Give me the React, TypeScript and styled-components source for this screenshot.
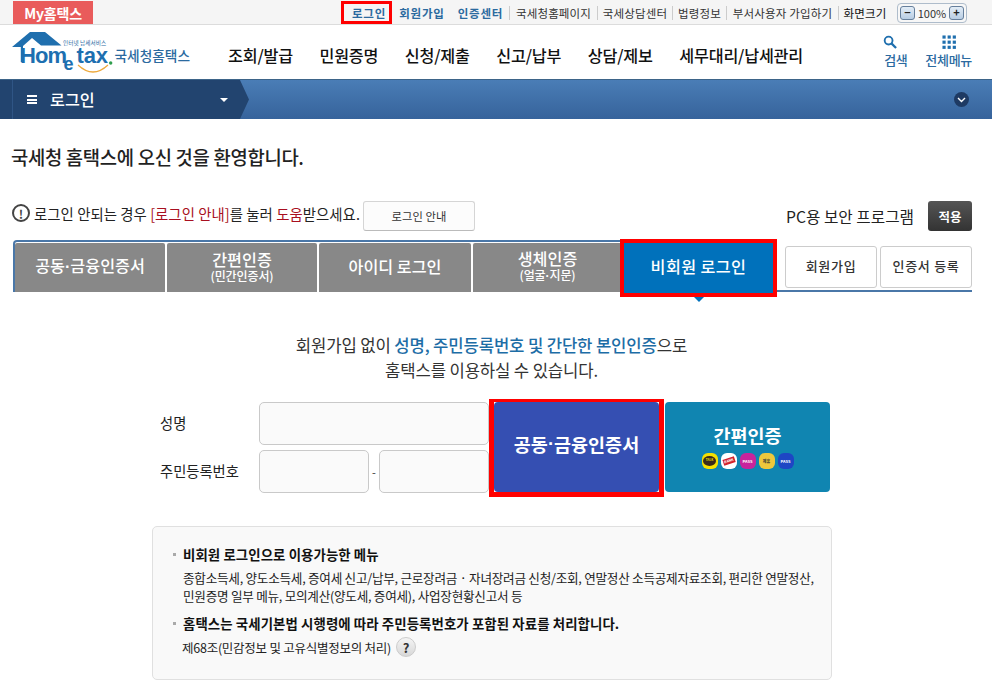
import React from "react";
import styled, { createGlobalStyle } from "styled-components";

const Global = createGlobalStyle`
  html, body { margin: 0; padding: 0; background: #fff; overflow: hidden; }
  body { font-family: "Noto Sans CJK KR", "Noto Sans", sans-serif; color: #222; }
  * { box-sizing: border-box; }
`;

const Page = styled.div`width: 992px; height: 689px; overflow: hidden;`;

const TopBar = styled.div`
  height: 25px; background: #f5f5f5; border-bottom: 1px solid #dcdcdc;
  display: flex; align-items: flex-start; justify-content: space-between; padding: 1px 25px 0 13px;
`;
const MyTab = styled.a`
  width: 80px; height: 23px; background: #e95b5b; color: #fff; font-size: 14px; font-weight: 700;
  display: flex; align-items: center; justify-content: center; letter-spacing: -0.2px;
`;
const TopLinks = styled.div`display: flex; align-items: center; height: 23px;`;
const TopPrimary = styled.a<{ $boxed?: boolean; $w: number }>`
  width: ${p => p.$w}px; height: 23px; display: flex; align-items: center; justify-content: center;
  color: #2b6a9f; font-size: 11.5px; font-weight: 700; letter-spacing: 0.8px; white-space: nowrap;
  ${p => p.$boxed && "border: 3px solid #f00; padding-left: 5px;"}
`;
const TopLink = styled.a<{ $w: number; $sep?: boolean; $dark?: boolean }>`
  width: ${p => p.$w}px; display: flex; align-items: center; justify-content: center; white-space: nowrap;
  font-size: 11.5px; letter-spacing: 0.15px; color: ${p => p.$dark ? "#111" : "#333"}; height: 14px;
  ${p => p.$sep && "border-left: 1px solid #ccc;"}
`;
const Zoomer = styled.div`
  width: 70px; height: 20px; margin-left: 6px; border: 1px solid #aebccb; border-radius: 4px;
  display: flex; align-items: center; justify-content: space-between; padding: 0 2px; font-size: 11px; color: #333; background: #f7f7f7;
`;
const ZoomBtn = styled.span`
  width: 15px; height: 14px; border: 1px solid #667f9c; border-radius: 3px; background: linear-gradient(#e3edf7, #b8cde3);
  display: flex; align-items: center; justify-content: center; font-size: 11px; line-height: 1; font-weight: 700; color: #222;
`;

const Header = styled.div`height: 54px; display: flex; align-items: flex-start; padding-left: 12px; background: #fff;`;
const LogoBox = styled.div`width: 181px; height: 54px; flex: none;`;
const Nav = styled.nav`display: flex; margin-left: 35px; padding-top: 19px; gap: 26.6px;`;
const NavItem = styled.a`font-size: 16.2px; font-weight: 500; color: #111; line-height: 22px; white-space: nowrap; letter-spacing: -0.2px;`;
const HeaderTools = styled.div`margin-left: auto; display: flex; gap: 17px; padding: 10px 20px 0 0;`;
const Tool = styled.a`
  display: flex; flex-direction: column; align-items: center; color: #2b6a9f; font-size: 13px; line-height: 18px; font-weight: 500; letter-spacing: -0.3px; gap: 2px;
`;
const SearchSlot = styled.span`display: flex; height: 14px; margin-right: 11px;`;

const Crumbs = styled.div`height: 40px; display: flex; align-items: center; background: linear-gradient(#4a7db6, #36639b); border-top: 1px solid #3d6488; padding-right: 23px;`;
const CrumbCurrent = styled.div`
  width: 249px; height: 100%; background: linear-gradient(90deg, #22446f 12px, #2f5585 12px, #2f5585 13px, #22446f 13px);
  clip-path: polygon(0 0, 240px 0, 249px 50%, 240px 100%, 0 100%);
  padding: 0 30px 0 27px; display: flex; align-items: center; color: #fff; font-size: 16.2px; font-weight: 500;
`;
const CrumbLabel = styled.span`padding-bottom: 2px;`;
const Bars = styled.span`width: 10px; height: 9px; border-top: 2px solid #fff; border-bottom: 2px solid #fff; position: relative; margin-right: 13px;
  &::after { content: ""; position: absolute; left: 0; right: 0; top: 1.5px; height: 2px; background: #fff; }
`;
const Caret = styled.span`margin-left: auto; margin-right: -9px; border: 4px solid transparent; border-top: 4px solid #fff; border-bottom: 0;`;
const Round = styled.span`margin-left: auto; width: 15px; height: 15px; border-radius: 50%; background: #1e3a63; display: flex; align-items: center; justify-content: center;`;

const Main = styled.main`padding: 0 20px 0 11px;`;
const Title = styled.h1`margin: 26px 0 0; font-size: 18.8px; line-height: 24px; font-weight: 500; color: #222; letter-spacing: -0.3px;`;
const NoticeRow = styled.div`display: flex; align-items: center; height: 30px; margin-top: 32px; justify-content: space-between;`;
const Notice = styled.div`display: flex; align-items: center; font-size: 14.4px; color: #222; letter-spacing: 0.05px; white-space: nowrap;`;
const NoticeText = styled.span`display: flex; align-items: center; padding-bottom: 6px;`;
const Alert = styled.span`
  width: 18px; height: 18px; border: 2px solid #444; border-radius: 50%; margin: 0 4px 0 1px; font-size: 12px; font-weight: 700; display: flex; align-items: center; justify-content: center; color: #444;
`;
const Red = styled.span`color: #a80f20;`;
const GuideBtn = styled.a`
  width: 112px; height: 30px; margin-left: 3px; border: 1px solid #d5d5d5; border-bottom-color: #bbb; border-radius: 3px; background: #fcfcfc; font-size: 11.3px;
  display: flex; align-items: center; justify-content: center; color: #333;
`;
const Security = styled.div`display: flex; align-items: center; gap: 14px; font-size: 15.7px; color: #222;`;
const Apply = styled.a`
  width: 44px; height: 30px; border-radius: 3px; background: linear-gradient(#555, #333); color: #fff; font-size: 12.5px; font-weight: 700;
  display: flex; align-items: center; justify-content: center;
`;

const TabRow = styled.div`display: flex; margin: 9px 0 0 2px; height: 52px; border-bottom: 2px solid #4a77a8; width: 959px;`;
const TabGroup = styled.div`display: flex; border-top: 2px solid #4a77a8; border-left: 2px solid #4a77a8; border-right: 2px solid #4a77a8; border-top-left-radius: 4px; border-top-right-radius: 4px; padding-top: 1px; gap: 2px; background: #fff; margin-bottom: -2px; height: 52px;`;
const Tab = styled.a<{ $w: number }>`
  width: ${p => p.$w}px; background: #888; color: #fff; font-size: 16.2px; font-weight: 500; border-radius: 2px 2px 0 0;
  display: flex; flex-direction: column; align-items: center; justify-content: center; line-height: 20px; height: 49px; white-space: nowrap; padding-bottom: 4px;
`;
const TabSub = styled.small`font-size: 12px; line-height: 14px; font-weight: 500; letter-spacing: -0.1px;`;
const Dot = styled.span`font-family: "Liberation Sans", sans-serif; font-weight: 700;`;
const ActiveTab = styled.a`
  width: 157px; height: 58px; margin: -4px -3px -5px -4px; border: 4px solid #f00; background: #0071bb; color: #fff; font-size: 16.2px; font-weight: 500;
  display: flex; align-items: center; justify-content: center; position: relative; letter-spacing: 0.4px; padding-bottom: 5px;
  &::after { content: ""; position: absolute; left: 50%; margin-left: -5px; bottom: -9px; border: 5px solid transparent; border-top-color: #0071bb; border-bottom: 0; }
`;
const SideBtns = styled.div`margin-left: auto; display: flex; gap: 3px; padding-top: 6px;`;
const SideBtn = styled.a<{ $w: number }>`
  width: ${p => p.$w}px; height: 42px; border: 1px solid #ccc; border-radius: 3px; background: #fff; font-size: 13px; font-weight: 500; letter-spacing: 0.7px; padding-bottom: 4px;
  display: flex; align-items: center; justify-content: center; color: #333;
`;

const Lead = styled.p`margin: 41px 0 0; text-align: center; font-size: 16.7px; line-height: 25px; color: #333; letter-spacing: -0.15px;`;
const Accent = styled.strong`color: #1d6da6; font-weight: 500;`;

const FormArea = styled.div`display: flex; margin: 19px 0 0 149px;`;
const Labels = styled.div`width: 99px; display: flex; flex-direction: column; gap: 5px; font-size: 14.3px; color: #222;`;
const FLabel = styled.label`height: 43px; display: flex; align-items: center; padding-bottom: 3px;`;
const Fields = styled.div`width: 230px; display: flex; flex-direction: column; gap: 5px;`;
const Input = styled.div<{ $w?: number }>`
  width: ${p => p.$w ? p.$w + "px" : "100%"}; height: 43px; border: 1px solid #c9c9c9; border-radius: 5px; background: #fafafa;
`;
const SsnRow = styled.div`display: flex; align-items: center; justify-content: space-between; font-size: 11px; color: #333;`;
const CertBtn = styled.a`
  width: 175px; height: 98px; margin: -3px 0 -5px 0; border-style: solid; border-color: #f00; border-width: 3px 5px 5px; background: #fff; flex: none;
  display: flex; align-items: stretch;
`;
const CertInner = styled.span`
  flex: 1; background: #354fb2; color: #fff; border-radius: 4px; display: flex; align-items: center; justify-content: center; font-size: 18.5px; font-weight: 700; white-space: nowrap; padding-bottom: 6px;
`;
const SimpleBtn = styled.a`
  width: 165px; height: 90px; margin-left: 1px; background: #1085b1; color: #fff; border-radius: 4px; display: flex; flex-direction: column; align-items: center; justify-content: center; font-size: 18.5px; line-height: 26px; font-weight: 700; gap: 5px; padding-bottom: 4px;
`;
const Badges = styled.span`display: flex; gap: 3px;`;
const Badge = styled.span<{ $bg: string; $fg: string }>`
  width: 16px; height: 16px; border-radius: 6px; background: ${p => p.$bg}; color: ${p => p.$fg}; font-size: 4px; line-height: 1; font-weight: 700; display: flex; align-items: center; justify-content: center; overflow: hidden; white-space: nowrap;
`;
const TalkBubble = styled.span`width: 13px; height: 10px; border-radius: 50%; background: #3a2a1a; color: #f5e000; display: flex; align-items: center; justify-content: center; font-size: 3px;`;
const BankBand = styled.span`background: #d2222d; color: #fff; padding: 1px; transform: rotate(-18deg); font-size: 3.5px;`;

const InfoBox = styled.section`
  width: 680px; height: 154px; margin: 33px 0 0 141px; border: 1px solid #e0e0e0; border-radius: 5px; background: #f9f9f9; padding: 18px 10px 0 20px;
`;
const InfoHead = styled.h3<{ $top?: number }>`
  margin: ${p => p.$top ?? 0}px 0 0; font-size: 13.4px; line-height: 18px; font-weight: 700; color: #111; padding-left: 10px; position: relative; letter-spacing: 0.1px; white-space: nowrap;
  &::before { content: ""; position: absolute; left: 0; top: 8px; width: 3px; height: 3px; background: #aaa; }
`;
const InfoText = styled.p`margin: 6px 0 0 10px; font-size: 12.6px; line-height: 18px; color: #222; letter-spacing: -0.25px; white-space: nowrap;`;
const LawRow = styled.div`margin: 5px 0 0 9px; display: flex; align-items: center; font-size: 12.5px; color: #222; gap: 5px; letter-spacing: -0.25px;`;
const Help = styled.span`
  width: 20px; height: 20px; border-radius: 50%; border: 1px solid #ccc; background: linear-gradient(#f4f4f4, #d8d8d8); color: #333; font-size: 13px; font-weight: 700; display: flex; align-items: center; justify-content: center;
`;

const Logo = () => (
  <svg width="181" height="54" viewBox="0 0 181 54">
    <path d="M0 22 L18 7 H33 L49.5 20.5 H29 L20 13 L11 21 V37 H8.8 V22 Z" fill="#1f6fae" />
    <text x="51" y="19.5" fontSize="5.6" fill="#2b6a9f" fontFamily="Noto Sans CJK KR, sans-serif" letterSpacing="0.1">인터넷 납세서비스</text>
    <text x="8" y="37.5" fontSize="22" fontWeight="700" fill="#1d6fb0" fontFamily="Liberation Sans, sans-serif" letterSpacing="-0.9">Hom</text>
    <text x="51.5" y="44.7" fontSize="18" fontWeight="700" fill="#1d6fb0" fontFamily="Liberation Sans, sans-serif">e</text>
    <text x="64.5" y="37.5" fontSize="22" fontWeight="700" fill="#1d6fb0" fontFamily="Liberation Sans, sans-serif" letterSpacing="-0.2">tax</text>
    <circle cx="98.7" cy="38" r="1.7" fill="#2f9e4d" />
    <path d="M66 40 Q81 54 96 40" fill="none" stroke="#eda93c" strokeWidth="1.2" />
    <text x="102.5" y="35.7" fontSize="13.7" fontWeight="500" fill="#2b6a9f" fontFamily="Noto Sans CJK KR, sans-serif">국세청홈택스</text>
  </svg>
);

const Search = () => (
  <svg width="14" height="14" viewBox="0 0 15 15"><circle cx="6" cy="6" r="4.2" fill="none" stroke="#1f6fae" strokeWidth="2" /><path d="M9 9 L14 14" stroke="#1f6fae" strokeWidth="2.4" /></svg>
);
const Grid = () => (
  <svg width="14" height="14" viewBox="0 0 15 15" fill="#1f6fae">
    {[0, 5.5, 11].flatMap(y => [0, 5.5, 11].map(x => <rect key={`${x}-${y}`} x={x + 0.5} y={y + 0.5} width="3.4" height="3.4" />))}
  </svg>
);

export default function App() {
  return (
    <Page>
      <Global />
      <TopBar>
        <MyTab>My홈택스</MyTab>
        <TopLinks>
          <TopPrimary $boxed $w={51}>로그인</TopPrimary>
          <TopPrimary $w={60}>회원가입</TopPrimary>
          <TopPrimary $w={57}>인증센터</TopPrimary>
          <TopLink $w={88} $sep>국세청홈페이지</TopLink>
          <TopLink $w={75} $sep>국세상담센터</TopLink>
          <TopLink $w={54} $sep>법령정보</TopLink>
          <TopLink $w={112} $sep>부서사용자 가입하기</TopLink>
          <TopLink $w={53} $sep $dark>화면크기</TopLink>
          <Zoomer><ZoomBtn>−</ZoomBtn>100%<ZoomBtn>+</ZoomBtn></Zoomer>
        </TopLinks>
      </TopBar>
      <Header>
        <LogoBox><Logo /></LogoBox>
        <Nav>
          <NavItem>조회/발급</NavItem>
          <NavItem>민원증명</NavItem>
          <NavItem>신청/제출</NavItem>
          <NavItem>신고/납부</NavItem>
          <NavItem>상담/제보</NavItem>
          <NavItem>세무대리/납세관리</NavItem>
        </Nav>
        <HeaderTools>
          <Tool><SearchSlot><Search /></SearchSlot>검색</Tool>
          <Tool><Grid />전체메뉴</Tool>
        </HeaderTools>
      </Header>
      <Crumbs>
        <CrumbCurrent><Bars /><CrumbLabel>로그인</CrumbLabel><Caret /></CrumbCurrent>
        <Round>
          <svg width="9" height="6" viewBox="0 0 9 6"><path d="M1 1 L4.5 4.5 L8 1" fill="none" stroke="#fff" strokeWidth="1.4" /></svg>
        </Round>
      </Crumbs>
      <Main>
        <Title>국세청 홈택스에 오신 것을 환영합니다.</Title>
        <NoticeRow>
          <Notice>
            <NoticeText>
              <Alert>!</Alert>로그인 안되는 경우&nbsp;<Red>[로그인 안내]</Red>를 눌러&nbsp;<Red>도움</Red>받으세요.
            </NoticeText>
            <GuideBtn>로그인 안내</GuideBtn>
          </Notice>
          <Security>PC용 보안 프로그램<Apply>적용</Apply></Security>
        </NoticeRow>
        <TabRow>
          <TabGroup>
            <Tab $w={150}><span>공동<Dot>·</Dot>금융인증서</span></Tab>
            <Tab $w={150}>간편인증<TabSub>(민간인증서)</TabSub></Tab>
            <Tab $w={152}>아이디 로그인</Tab>
            <Tab $w={149}>생체인증<TabSub>(얼굴<Dot>·</Dot>지문)</TabSub></Tab>
            <ActiveTab>비회원 로그인</ActiveTab>
          </TabGroup>
          <SideBtns>
            <SideBtn $w={92}>회원가입</SideBtn>
            <SideBtn $w={92}>인증서 등록</SideBtn>
          </SideBtns>
        </TabRow>
        <Lead>
          회원가입 없이 <Accent>성명, 주민등록번호 및 간단한 본인인증</Accent>으로<br />홈택스를 이용하실 수 있습니다.
        </Lead>
        <FormArea>
          <Labels>
            <FLabel>성명</FLabel>
            <FLabel>주민등록번호</FLabel>
          </Labels>
          <Fields>
            <Input />
            <SsnRow><Input $w={110} />-<Input $w={110} /></SsnRow>
          </Fields>
          <CertBtn><CertInner>공동<Dot>·</Dot>금융인증서</CertInner></CertBtn>
          <SimpleBtn>
            간편인증
            <Badges>
              <Badge $bg="#f5e000" $fg="#3a2a1a"><TalkBubble>TALK</TalkBubble></Badge>
              <Badge $bg="#fff" $fg="#d2222d"><BankBand>BANK</BankBand></Badge>
              <Badge $bg="#c8249c" $fg="#fff">PASS</Badge>
              <Badge $bg="#eec83c" $fg="#333">제휴</Badge>
              <Badge $bg="#1e46c4" $fg="#fff">PASS</Badge>
            </Badges>
          </SimpleBtn>
        </FormArea>
        <InfoBox>
          <InfoHead>비회원 로그인으로 이용가능한 메뉴</InfoHead>
          <InfoText>
            종합소득세, 양도소득세, 증여세 신고/납부, 근로장려금 · 자녀장려금 신청/조회, 연말정산 소득공제자료조회, 편리한 연말정산,<br />
            민원증명 일부 메뉴, 모의계산(양도세, 증여세), 사업장현황신고서 등
          </InfoText>
          <InfoHead $top={9}>홈택스는 국세기본법 시행령에 따라 주민등록번호가 포함된 자료를 처리합니다.</InfoHead>
          <LawRow>제68조(민감정보 및 고유식별정보의 처리)<Help>?</Help></LawRow>
        </InfoBox>
      </Main>
    </Page>
  );
}
